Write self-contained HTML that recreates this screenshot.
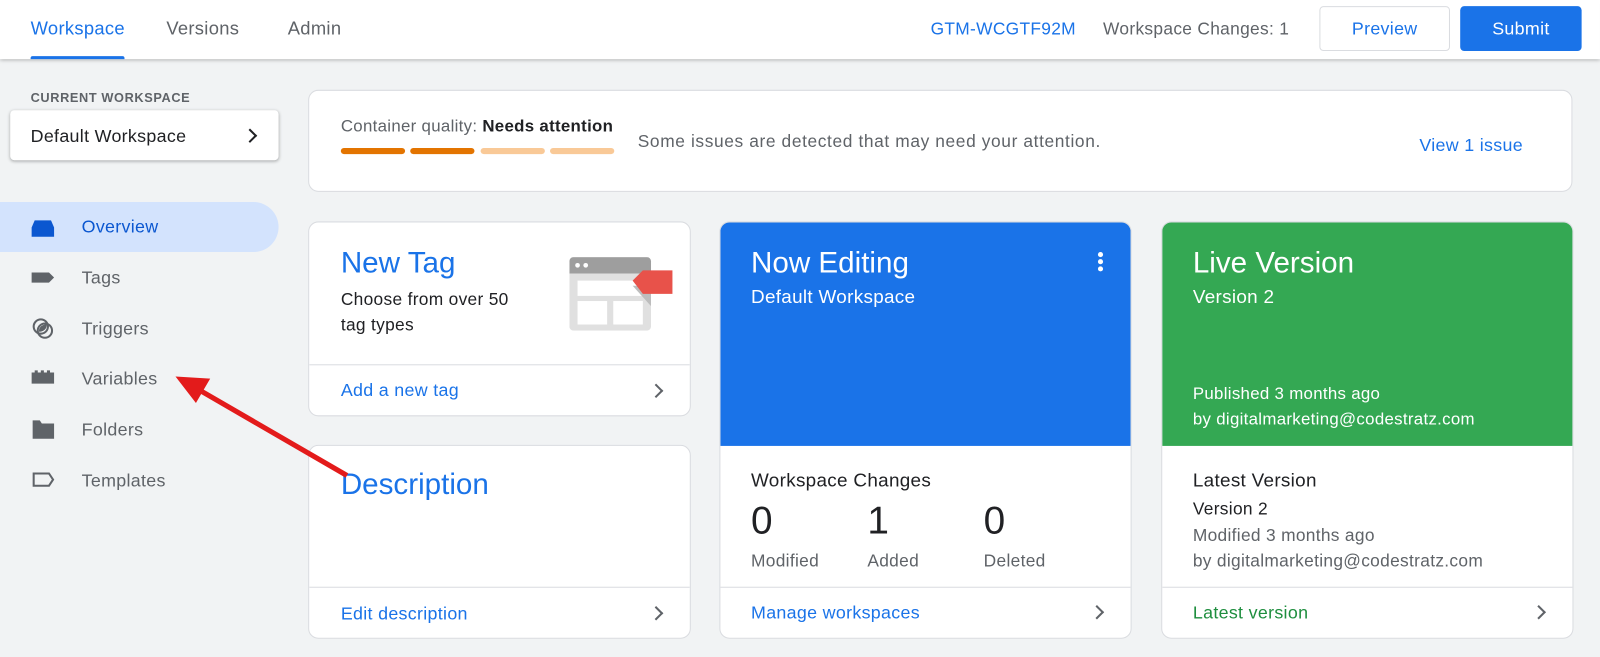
<!DOCTYPE html>
<html><head><style>
*{box-sizing:border-box;margin:0;padding:0}
body{width:1600px;height:657px;background:#f1f3f4;font-family:"Liberation Sans",Arial,sans-serif;position:relative;overflow:hidden;color:#202124}
#w{position:absolute;left:0;top:0;width:1568px;height:644px;transform:scale(1.0204);transform-origin:0 0;letter-spacing:.3px}
.a{position:absolute}
.top{left:0;top:0;width:1568px;height:58px;background:#fff;box-shadow:0 1px 4px rgba(0,0,0,.35)}
.card{position:absolute;background:#fff;border:1px solid #dadce0;border-radius:10px;overflow:hidden}
.link{color:#1a73e8;font-size:17.5px}
.chev{position:absolute;width:10px;height:10px;border-right:2px solid #5f6368;border-top:2px solid #5f6368;transform:rotate(45deg)}
.nav{position:absolute;left:80px;font-size:17.5px;color:#5f6368}
</style></head><body><div id="w">
<div class="a top">
 <div class="a" style="left:30px;top:18px;font-size:18px;color:#1a73e8">Workspace</div>
 <div class="a" style="left:30px;top:55px;width:92px;height:3px;background:#1a73e8;border-radius:2px 2px 0 0"></div>
 <div class="a" style="left:163px;top:18px;font-size:18px;color:#5f6368">Versions</div>
 <div class="a" style="left:282px;top:18px;font-size:18px;color:#5f6368">Admin</div>
 <div class="a" style="left:912px;top:19px;font-size:17px;color:#1a73e8">GTM-WCGTF92M</div>
 <div class="a" style="left:1081px;top:19px;font-size:17px;color:#5f6368">Workspace Changes: 1</div>
 <div class="a" style="left:1293px;top:6px;width:128px;height:44px;border:1px solid #dadce0;border-radius:4px;color:#1a73e8;font-size:17.5px;text-align:center;line-height:42px">Preview</div>
 <div class="a" style="left:1431px;top:6px;width:119px;height:44px;background:#1a73e8;border-radius:4px;color:#fff;font-size:17.5px;text-align:center;line-height:44px">Submit</div>
</div>
<div class="a" style="left:30px;top:89px;font-size:12.5px;color:#5f6368;font-weight:bold;letter-spacing:.6px">CURRENT WORKSPACE</div>
<div class="a" style="left:10px;top:108px;width:263px;height:49px;background:#fff;border-radius:4px;box-shadow:0 1px 3px rgba(0,0,0,.3)">
 <div class="a" style="left:20px;top:15px;font-size:17.5px">Default Workspace</div>
 <div class="chev" style="left:230px;top:20px;border-color:#202124"></div>
</div>
<div class="a" style="left:0;top:198px;width:273px;height:49px;background:#d3e3fd;border-radius:0 25px 25px 0"></div>
<svg class="a" style="left:28px;top:210px" width="28" height="130" viewBox="0 0 28 130">
 <path d="M3 13 L6 6 H22 L25 13 V22 H3Z" fill="#0b57d0"/>
 <path d="M3 57 H20 L25 62 L20 67 H3Z" fill="#5f6368"/>
 <circle cx="12" cy="110" r="7" fill="none" stroke="#5f6368" stroke-width="2"/><circle cx="16" cy="114" r="7" fill="none" stroke="#5f6368" stroke-width="2"/><path d="M10 115 A7 7 0 0 1 18 108 A7 7 0 0 1 10 115Z" fill="#5f6368"/>
</svg>
<svg class="a" style="left:28px;top:360px" width="28" height="125" viewBox="0 0 28 125">
 <path d="M3 5 H6 V3 H9 V5 H12 V3 H15 V5 H18 V3 H21 V5 H25 V16 H3Z" fill="#5f6368"/>
 <path d="M4 52 H11 L13 55 H25 V70 H4Z" fill="#5f6368"/>
 <path d="M5 104 H20 L24 110 L20 116 H5Z" fill="none" stroke="#5f6368" stroke-width="2"/>
</svg>
<div class="nav" style="top:212px;color:#0b57d0">Overview</div>
<div class="nav" style="top:262px">Tags</div>
<div class="nav" style="top:312px">Triggers</div>
<div class="nav" style="top:361px">Variables</div>
<div class="nav" style="top:411px">Folders</div>
<div class="nav" style="top:461px">Templates</div>

<div class="card" style="left:302px;top:88px;width:1239px;height:100px">
 <div class="a" style="left:31px;top:26px;font-size:16.5px;color:#5f6368">Container quality: <b style="color:#202124;font-weight:600">Needs attention</b></div>
 <div class="a" style="left:31px;top:56px;width:63px;height:6px;border-radius:3px;background:#e37400"></div>
 <div class="a" style="left:99px;top:56px;width:63px;height:6px;border-radius:3px;background:#e37400"></div>
 <div class="a" style="left:168px;top:56px;width:63px;height:6px;border-radius:3px;background:#f9c997"></div>
 <div class="a" style="left:236px;top:56px;width:63px;height:6px;border-radius:3px;background:#f9c997"></div>
 <div class="a" style="left:322px;top:40px;font-size:17px;color:#5f6368;letter-spacing:.6px">Some issues are detected that may need your attention.</div>
 <div class="a link" style="left:1088px;top:43px">View 1 issue</div>
</div>

<div class="card" style="left:302px;top:217px;width:375px;height:191px">
 <div class="a" style="left:31px;top:24px;font-size:29px;color:#1a73e8;letter-spacing:0">New Tag</div>
 <div class="a" style="left:31px;top:63px;font-size:17px;line-height:25px">Choose from over 50<br>tag types</div>
 <svg class="a" style="left:255px;top:34px" width="105" height="72" viewBox="0 0 105 72">
  <rect x="0" y="0" width="80" height="72" rx="4" fill="#e0e0e0"/><path d="M0 4a4 4 0 0 1 4-4h72a4 4 0 0 1 4 4v12H0z" fill="#9e9e9e"/>
  <circle cx="8" cy="8" r="2.3" fill="#fff"/><circle cx="16" cy="8" r="2.3" fill="#fff"/>
  <rect x="8" y="23" width="64" height="15" fill="#fff"/><rect x="8" y="43" width="29" height="23" fill="#fff"/><rect x="43" y="43" width="29" height="23" fill="#fff"/>
  <path d="M62 28 L80 48 V28Z" fill="#bdbdbd"/>
  <path d="M62 23 L72 13 H101 V36 H72Z" fill="#e8524a"/>
 </svg>
 <div class="a" style="left:0;top:139px;width:100%;height:1px;background:#dadce0"></div>
 <div class="a link" style="left:31px;top:154px">Add a new tag</div>
 <div class="chev" style="left:335px;top:160px"></div>
</div>

<div class="card" style="left:302px;top:436px;width:375px;height:190px">
 <div class="a" style="left:31px;top:22px;font-size:29px;color:#1a73e8;letter-spacing:0">Description</div>
 <div class="a" style="left:0;top:138px;width:100%;height:1px;background:#dadce0"></div>
 <div class="a link" style="left:31px;top:154px">Edit description</div>
 <div class="chev" style="left:335px;top:159px"></div>
</div>

<div class="card" style="left:705px;top:217px;width:404px;height:409px">
 <div class="a" style="left:0;top:0;width:100%;height:219px;background:#1a73e8"></div>
 <div class="a" style="left:30px;top:24px;font-size:29px;color:#fff;letter-spacing:0">Now Editing</div>
 <div class="a" style="left:30px;top:62px;font-size:18.5px;color:#fff">Default Workspace</div>
 <div class="a" style="left:370px;top:29px;width:5px;height:5px;border-radius:50%;background:#fff;box-shadow:0 7px 0 #fff,0 14px 0 #fff"></div>
 <div class="a" style="left:30px;top:242px;font-size:18.5px">Workspace Changes</div>
 <div class="a" style="left:30px;top:272px;font-size:38px">0</div>
 <div class="a" style="left:144px;top:272px;font-size:38px">1</div>
 <div class="a" style="left:258px;top:272px;font-size:38px">0</div>
 <div class="a" style="left:30px;top:322px;font-size:17px;color:#5f6368">Modified</div>
 <div class="a" style="left:144px;top:322px;font-size:17px;color:#5f6368">Added</div>
 <div class="a" style="left:258px;top:322px;font-size:17px;color:#5f6368">Deleted</div>
 <div class="a" style="left:0;top:357px;width:100%;height:1px;background:#dadce0"></div>
 <div class="a link" style="left:30px;top:372px">Manage workspaces</div>
 <div class="chev" style="left:364px;top:377px"></div>
</div>

<div class="card" style="left:1138px;top:217px;width:404px;height:409px">
 <div class="a" style="left:0;top:0;width:100%;height:219px;background:#34a853"></div>
 <div class="a" style="left:30px;top:24px;font-size:29px;color:#fff;letter-spacing:0">Live Version</div>
 <div class="a" style="left:30px;top:62px;font-size:18.5px;color:#fff">Version 2</div>
 <div class="a" style="left:30px;top:156px;font-size:16.5px;color:#fff;line-height:25px">Published 3 months ago<br>by digitalmarketing@codestratz.com</div>
 <div class="a" style="left:30px;top:242px;font-size:18.5px">Latest Version</div>
 <div class="a" style="left:30px;top:271px;font-size:17px">Version 2</div>
 <div class="a" style="left:30px;top:294px;font-size:17px;color:#5f6368;line-height:25px">Modified 3 months ago<br>by digitalmarketing@codestratz.com</div>
 <div class="a" style="left:0;top:357px;width:100%;height:1px;background:#dadce0"></div>
 <div class="a" style="left:30px;top:372px;font-size:17.5px;color:#1e8e3e">Latest version</div>
 <div class="chev" style="left:364px;top:377px"></div>
</div>

<svg class="a" style="left:0;top:0" width="1568" height="644">
 <line x1="340" y1="466" x2="195" y2="382" stroke="#e31b1b" stroke-width="5"/>
 <path d="M172 369 L206 371 L192 395Z" fill="#e31b1b"/>
</svg>
</div></body></html>
